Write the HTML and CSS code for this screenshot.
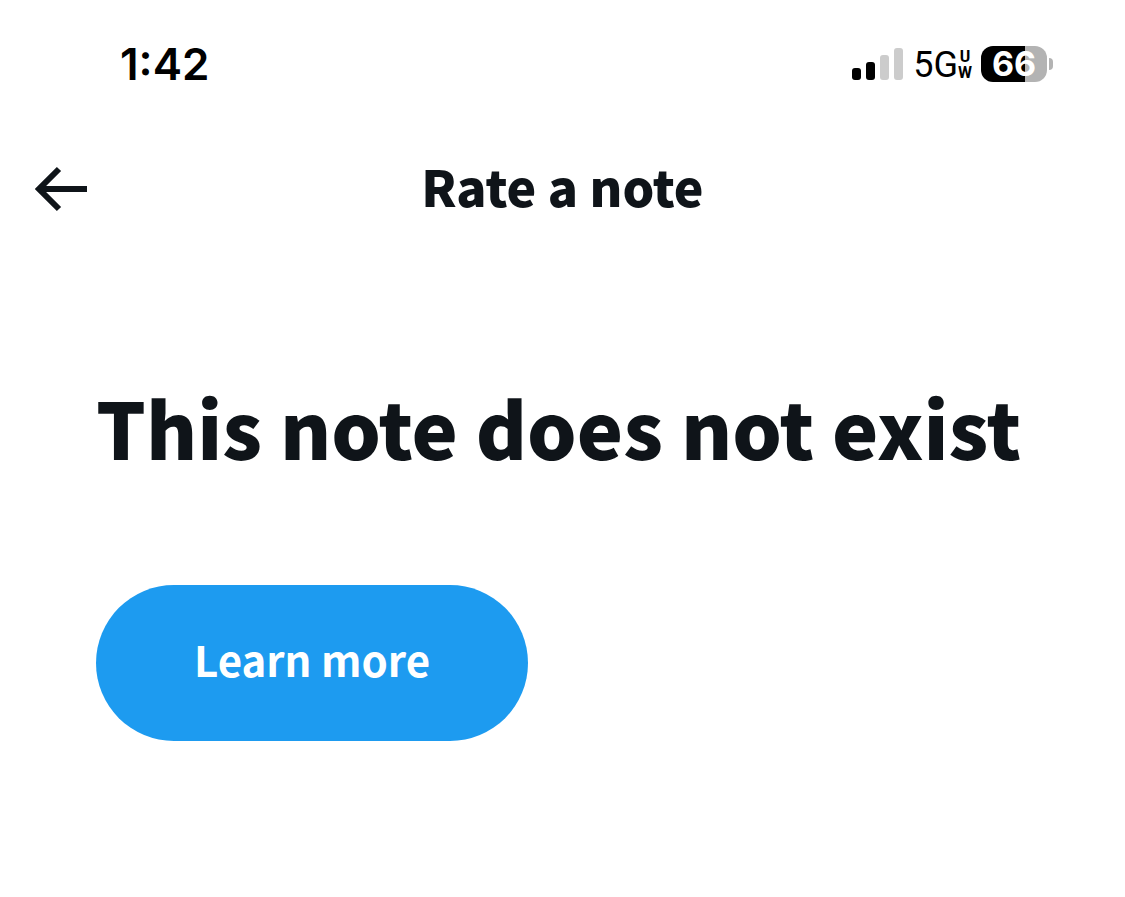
FILE: index.html
```html
<!DOCTYPE html>
<html lang="en">
  <head>
    <meta charset="UTF-8" />
    <meta name="viewport" content="width=device-width, initial-scale=1.0" />
    <title>Rate a note</title>
    <link rel="stylesheet" href="styles.css">
  </head>
  <body>
    <div class="status-bar">
      <span class="time">1:42</span>
      <div class="status-icons">
        <svg class="signal" viewBox="0 0 52 34" aria-hidden="true">
          <rect x="0" y="21" width="9" height="12" rx="3" />
          <rect x="14" y="15" width="9" height="18" rx="3" />
          <rect class="off" x="28" y="8" width="9" height="25" rx="3" />
          <rect class="off" x="42" y="1" width="9" height="32" rx="3" />
        </svg>
        <div class="network">
          <span>5G</span>
          <div class="network-band">
            <span>U</span>
            <span>W</span>
          </div>
        </div>
        <div class="battery"><span>66</span></div>
      </div>
    </div>
    <header class="header">
      <button class="back" aria-label="Back">
        <svg viewBox="0 0 54 46" aria-hidden="true">
          <path d="M25 3 L5 23 L25 43 M5 23 H53" />
        </svg>
      </button>
      <h1>Rate a note</h1>
    </header>
    <main>
      <h2>This note does not exist</h2>
      <a class="learn-more" href="#">Learn more</a>
    </main>
  </body>
</html>
```
FILE: styles.css
```css
* {
  box-sizing: border-box;
}

body {
  margin: 0;
  background: #fff;
  color: #0f1419;
  font-family: "Noto Sans CJK SC", "Noto Sans", sans-serif;
}

.status-bar {
  display: flex;
  align-items: center;
  justify-content: space-between;
  height: 128px;
  padding: 0 78px 0 120px;
  color: #000;
  font-family: Inter, sans-serif;
}

.time {
  font-size: 44px;
  font-weight: 600;
}

.status-icons {
  display: flex;
  align-items: center;
  gap: 9px;
}

.signal {
  width: 52px;
  height: 34px;
}

.signal .off {
  fill: #ccc;
}

.network {
  display: flex;
  align-items: center;
  padding-top: 2px;
  font-family: Roboto, sans-serif;
  font-size: 36px;
}

.network-band {
  display: flex;
  flex-direction: column;
  align-items: center;
  font-size: 16px;
  font-weight: 700;
  line-height: 16px;
}

.battery {
  position: relative;
  width: 66px;
  border-radius: 12px;
  background: linear-gradient(to right, #000 66%, #b3b3b3 66%);
  color: #fff;
  font-size: 34px;
  font-weight: 700;
  line-height: 36px;
  text-align: center;
}

.battery::after {
  content: "";
  position: absolute;
  top: 12px;
  right: -6px;
  width: 4px;
  height: 12px;
  border-radius: 0 4px 4px 0;
  background: #b3b3b3;
}

.header {
  display: grid;
  grid-template-columns: 54px 1fr 54px;
  align-items: center;
  height: 122px;
  padding: 0 34px;
}

.back {
  padding: 0;
  border: 0;
  background: none;
  cursor: pointer;
}

.back svg {
  display: block;
  width: 54px;
  fill: none;
  stroke: #0f1419;
  stroke-width: 6;
}

h1 {
  margin: 0;
  padding-bottom: 8px;
  font-size: 50px;
  font-weight: 800;
  line-height: 64px;
  text-align: center;
}

main {
  padding: 124px 96px 0;
}

h2 {
  margin: 0 0 107px;
  font-size: 78px;
  font-weight: 800;
  line-height: 104px;
}

.learn-more {
  display: inline-block;
  padding: 0 98px 8px;
  border-radius: 78px;
  background: #1d9bf0;
  color: #fff;
  font-size: 42px;
  font-weight: 700;
  line-height: 148px;
  text-decoration: none;
}
```
